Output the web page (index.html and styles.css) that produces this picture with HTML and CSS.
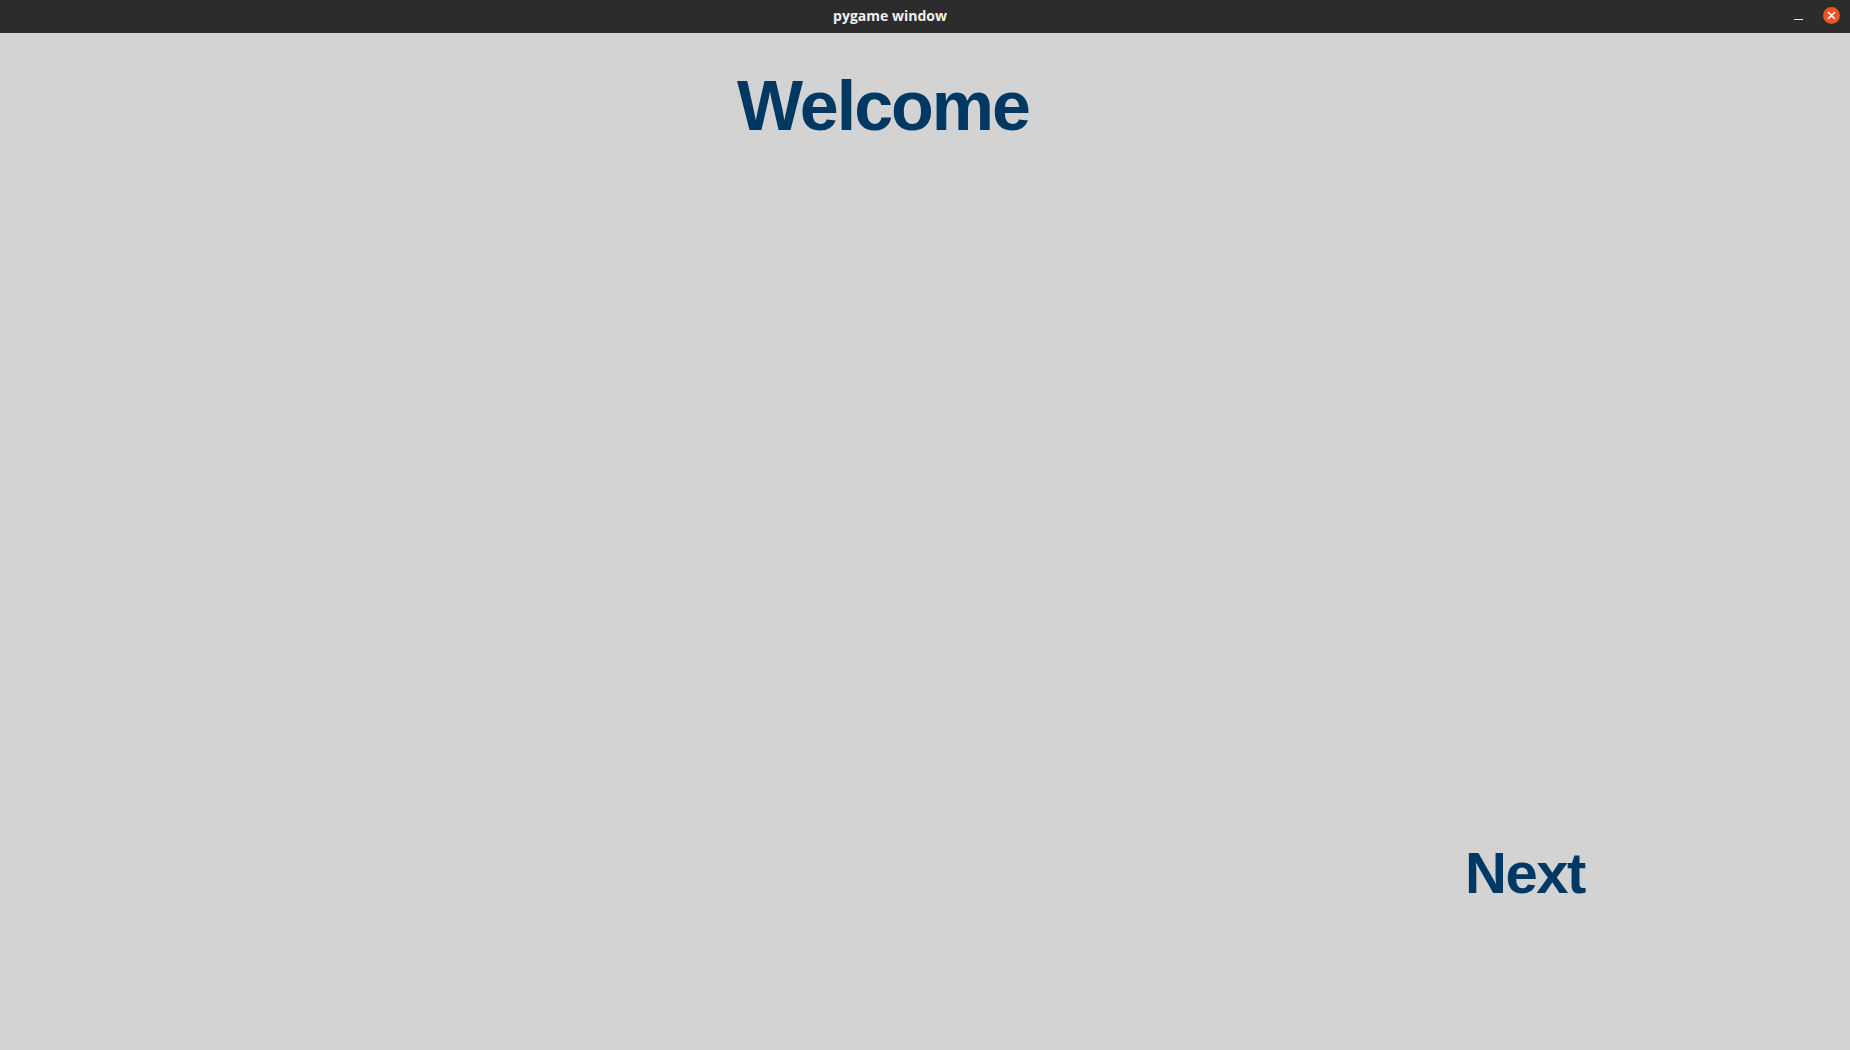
FILE: index.html
```html
<!DOCTYPE html>
<html>
<head>
<meta charset="utf-8">
<link rel="stylesheet" href="styles.css">
</head>
<body>
<div class="window">
  <header class="titlebar">
    <div class="title">pygame window</div>
    <div class="controls">
      <span class="minimize"></span>
      <span class="close">
        <svg width="17" height="17" viewBox="0 0 17 17"><circle cx="8.5" cy="8.5" r="8.5" fill="#e95420"/><path d="M5.5 5.5 L11.5 11.5 M11.5 5.5 L5.5 11.5" stroke="#ffffff" stroke-width="1.6" stroke-linecap="round"/></svg>
      </span>
    </div>
  </header>
  <main class="screen">
    <h1 class="welcome">Welcome</h1>
    <div class="spacer"></div>
    <div class="next-row"><span class="next">Next</span></div>
  </main>
</div>
</body>
</html>
```

FILE: styles.css
```css
html, body {
  margin: 0;
  padding: 0;
  width: 1850px;
  height: 1050px;
  overflow: hidden;
}
.window {
  width: 1850px;
  height: 1050px;
  display: flex;
  flex-direction: column;
  background: #d3d3d3;
}
.titlebar {
  height: 33px;
  background: #2c2c2c;
  display: flex;
  align-items: center;
  flex: none;
}
.title {
  width: 1780px;
  text-align: center;
  color: #f0f0f0;
  font-family: "Open Sans", "DejaVu Sans", sans-serif;
  font-weight: 700;
  font-size: 14px;
  padding-bottom: 2px;
}
.controls {
  display: flex;
  align-items: center;
  gap: 20px;
  margin-left: 14px;
}
.minimize {
  width: 9px;
  height: 1px;
  background: #e8e8e8;
  margin-top: 5px;
}
.close {
  display: flex;
  width: 17px;
  height: 17px;
  margin-top: -3px;
}
.screen {
  flex: 1;
  display: flex;
  flex-direction: column;
  font-family: "Liberation Sans", Arial, sans-serif;
  color: #003864;
  font-weight: 700;
}
.welcome {
  margin: 0;
  padding-top: 33px;
  text-align: center;
  width: 1766px;
  font-size: 70px;
  line-height: 80px;
  font-weight: 700;
  letter-spacing: -2px;
}
.spacer {
  flex: 1;
}
.next-row {
  display: flex;
  padding-left: 1465px;
  padding-bottom: 147px;
}
.next {
  font-size: 58px;
  line-height: 60px;
  letter-spacing: -1.5px;
}
```
